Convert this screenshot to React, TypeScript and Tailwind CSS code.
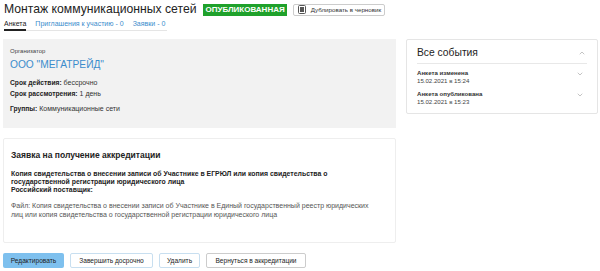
import { ChevronDown, ChevronUp } from 'lucide-react';

const events = [
  { title: 'Анкета изменена', date: '15.02.2021 в 15:24' },
  { title: 'Анкета опубликована', date: '15.02.2021 в 15:23' },
];

function CopyIcon() {
  return (
    <svg width="8" height="9" viewBox="0 0 8 9" className="shrink-0">
      <rect x="0.5" y="0.5" width="7" height="8" rx="1" fill="#fff" stroke="#555" />
      <rect x="2" y="2" width="4" height="5" fill="#555" />
    </svg>
  );
}

export default function App() {
  return (
    <div className="w-[600px] h-[271px] bg-white text-[#222] overflow-hidden" style={{ fontFamily: '"Liberation Sans", Arial, sans-serif' }}>
      {/* Header */}
      <div className="flex items-center pl-[4px] pt-[2px] h-[17px]">
        <h1 className="text-[12.2px] leading-[15px] text-[#222]">Монтаж коммуникационных сетей</h1>
        <span className="ml-[7px] bg-[#1fa12b] text-white text-[8px] leading-[12px] px-[2px] font-bold">ОПУБЛИКОВАННАЯ</span>
        <button className="ml-[6px] flex items-center gap-[5px] h-[12px] pl-[4px] pr-[3px] border border-[#ccc] rounded-[2px] text-[6.2px] text-[#333]">
          <CopyIcon />
          Дублировать в черновик
        </button>
      </div>

      {/* Tabs */}
      <div className="ml-[4px] mt-[2px] w-[163px] flex gap-[9px] text-[7px] leading-[9px] border-b border-[#e5e5e5] whitespace-nowrap">
        <div className="pb-[1px] border-b-2 border-[#222] -mb-px text-[#222]">Анкета</div>
        <div className="text-[#3b8ccc]">Приглашения к участию - 0</div>
        <div className="text-[#3b8ccc]">Заявки - 0</div>
      </div>

      <div className="flex gap-[10px] pl-[3px] mt-[8px]">
        {/* Left column */}
        <div className="w-[393px] flex flex-col gap-[10px]">
          <div className="h-[89px] bg-[#f2f2f2] px-[7px] pt-[9px]">
            <div className="text-[6px] leading-[7px] text-[#444]">Организатор</div>
            <div className="text-[10.2px] leading-[12px] text-[#3b8ccc] mt-[4px]">ООО "МЕГАТРЕЙД"</div>
            <div className="text-[7px] leading-[11px] mt-[6px] text-[#333]">
              <div><b className="text-[6.7px] text-[#222]">Срок действия:</b> бессрочно</div>
              <div><b className="text-[6.7px] text-[#222]">Срок рассмотрения:</b> 1 день</div>
              <div className="mt-[4px]"><b className="text-[6.7px] text-[#222]">Группы:</b> Коммуникационные сети</div>
            </div>
          </div>

          <div className="h-[105px] border border-[#eee] rounded-[2px] px-[7px] pt-[11px]">
            <div className="text-[8.5px] leading-[10px] font-bold text-[#222]">Заявка на получение аккредитации</div>
            <div className="text-[6.9px] leading-[7.8px] font-bold mt-[10px] pr-[30px]">
              Копия свидетельства о внесении записи об Участнике в ЕГРЮЛ или копия свидетельства о государственной регистрации юридического лица
              <div>Российский поставщик:</div>
            </div>
            <div className="text-[7px] leading-[8.5px] text-[#555] mt-[9px] pr-[6px]">
              Файл: Копия свидетельства о внесении записи об Участнике в Единый государственный реестр юридических лиц или копия свидетельства о государственной регистрации юридического лица
            </div>
          </div>
        </div>

        {/* Right column */}
        <div className="w-[192px] h-[75px] border border-[#e5e5e5] rounded-[2px] px-[10px] pt-[6px]">
          <div className="flex items-center justify-between border-b border-[#e8e8e8] pb-[4px]">
            <span className="text-[10.3px] leading-[13px] text-[#222]">Все события</span>
            <ChevronUp size={8} className="text-[#888] mr-[1px]" strokeWidth={1.5} />
          </div>
          <div className="flex flex-col gap-[5px] mt-[5px]">
            {events.map((e) => (
              <div key={e.title} className="flex items-start justify-between">
                <div className="text-[6.1px] leading-[8px]">
                  <div className="font-bold text-[#333]">{e.title}</div>
                  <div className="text-[#444]">{e.date}</div>
                </div>
                <ChevronDown size={8} className="text-[#888] mt-[1px] mr-[3px]" strokeWidth={1.5} />
              </div>
            ))}
          </div>
        </div>
      </div>

      {/* Actions */}
      <div className="flex gap-[6px] pl-[3px] mt-[10px] text-[6.6px]">
        <button className="h-[15px] w-[61px] bg-[#7ec0ee] rounded-[2px] text-[#222]">Редактировать</button>
        <button className="h-[15px] w-[83px] border border-[#c8dff0] rounded-[2px] text-[#222]">Завершить досрочно</button>
        <button className="h-[15px] w-[41px] border border-[#c8dff0] rounded-[2px] text-[#222]">Удалить</button>
        <button className="h-[15px] w-[100px] border border-[#ccc] rounded-[2px] text-[#222]">Вернуться в аккредитации</button>
      </div>
    </div>
  );
}
